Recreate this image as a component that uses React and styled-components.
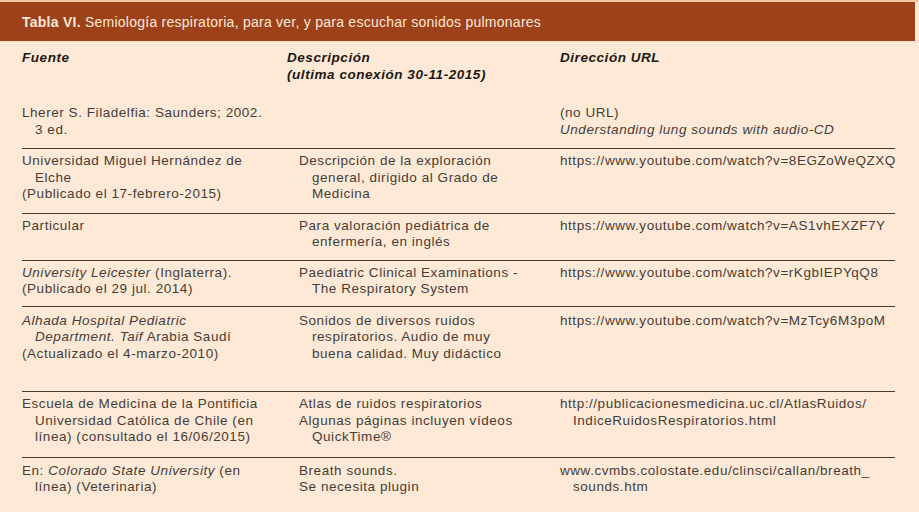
import React from 'react';
import styled, { createGlobalStyle } from 'styled-components';

const GlobalStyle = createGlobalStyle`
  html, body {
    margin: 0;
    padding: 0;
    background: #fde9d6;
  }
  body {
    font-family: "Liberation Sans", Arial, sans-serif;
    width: 919px;
    height: 512px;
    overflow: hidden;
  }
`;

const rows = [
  {
    cols: [
      [['Lherer S. Filadelfia: Saunders; 2002.', '3 ed.']],
      [],
      [['(no URL)'], [<i key="u">Understanding lung sounds with audio-CD</i>]],
    ],
    pad: [8, 10],
  },
  {
    cols: [
      [['Universidad Miguel Hernández de', 'Elche'], ['(Publicado el 17-febrero-2015)']],
      [['Descripción de la exploración', 'general, dirigido al Grado de', 'Medicina']],
      [['https://www.youtube.com/watch?v=8EGZoWeQZXQ']],
    ],
    pad: [4, 10],
  },
  {
    cols: [
      [['Particular']],
      [['Para valoración pediátrica de', 'enfermería, en inglés']],
      [['https://www.youtube.com/watch?v=AS1vhEXZF7Y']],
    ],
    pad: [4, 9],
  },
  {
    cols: [
      [[<><i>University Leicester</i> (Inglaterra).</>], ['(Publicado el 29 jul. 2014)']],
      [['Paediatric Clinical Examinations -', 'The Respiratory System']],
      [['https://www.youtube.com/watch?v=rKgbIEPYqQ8']],
    ],
    pad: [4, 8],
  },
  {
    cols: [
      [[<i key="a">Alhada Hospital Pediatric</i>, <><i>Department. Taif</i> Arabia Saudí</>], ['(Actualizado el 4-marzo-2010)']],
      [['Sonidos de diversos ruidos', 'respiratorios. Audio de muy', 'buena calidad. Muy didáctico']],
      [['https://www.youtube.com/watch?v=MzTcy6M3poM']],
    ],
    pad: [6, 29],
  },
  {
    cols: [
      [['Escuela de Medicina de la Pontificia', 'Universidad Católica de Chile (en', 'línea) (consultado el 16/06/2015)']],
      [['Atlas de ruidos respiratorios'], ['Algunas páginas incluyen vídeos', 'QuickTime®']],
      [['http://publicacionesmedicina.uc.cl/AtlasRuidos/', 'IndiceRuidosRespiratorios.html']],
    ],
    pad: [4, 11],
  },
  {
    cols: [
      [[<>En: <i>Colorado State University</i> (en</>, 'línea) (Veterinaria)']],
      [['Breath sounds.'], ['Se necesita plugin']],
      [['www.cvmbs.colostate.edu/clinsci/callan/breath_', 'sounds.htm']],
    ],
    pad: [5, 10],
  },
];

const Cell = ({ paras }) => (
  <Col>
    {paras.map((lines, i) => (
      <div key={i}>
        {lines.map((line, j) => (
          <Line key={j} $indent={j > 0}>{line}</Line>
        ))}
      </div>
    ))}
  </Col>
);

export default function App() {
  return (
    <>
      <GlobalStyle />
      <Page>
        <TitleBar>
          <span>
            <b>Tabla VI.</b> Semiología respiratoria, para ver, y para escuchar sonidos pulmonares
          </span>
        </TitleBar>
        <Table>
          <HeadRow>
            <Col $head>Fuente</Col>
            <Col $head $shift>
              <div>Descripción</div>
              <div>(ultima conexión 30-11-2015)</div>
            </Col>
            <Col $head>Dirección URL</Col>
          </HeadRow>
          {rows.map((r, i) => (
            <Row key={i} $top={r.pad[0]} $bottom={r.pad[1]} $last={i === rows.length - 1}>
              {r.cols.map((c, k) => (
                <Cell key={k} paras={c} />
              ))}
            </Row>
          ))}
        </Table>
      </Page>
    </>
  );
}

const Page = styled.div`
  width: 919px;
  height: 512px;
  padding-top: 2px;
  box-sizing: border-box;
  background: linear-gradient(#f6c9a4, #f6c9a4) top / 100% 2px no-repeat, #fde9d6;
`;

const TitleBar = styled.div`
  height: 39px;
  width: 915px;
  background: #9c4119;
  color: #fde7d6;
  font-size: 14px;
  letter-spacing: 0.25px;
  display: flex;
  align-items: center;
  padding-left: 22px;
  box-sizing: border-box;
  b {
    font-weight: 700;
  }
`;

const Table = styled.div`
  margin: 0 24px 0 22px;
  display: flex;
  flex-direction: column;
`;

const grid = `
  display: grid;
  grid-template-columns: 277px 261px 1fr;
`;

const HeadRow = styled.div`
  ${grid}
  padding: 9px 0 14px;
`;

const Row = styled.div`
  ${grid}
  padding: ${p => p.$top}px 0 ${p => p.$bottom}px;
  border-bottom: ${p => (p.$last ? 'none' : '1.5px solid #4a3b32')};
`;

const Col = styled.div`
  font-size: 13.5px;
  line-height: 16.5px;
  letter-spacing: 0.55px;
  color: ${p => (p.$head ? '#1e1814' : '#453d37')};
  font-weight: ${p => (p.$head ? 700 : 400)};
  font-style: ${p => (p.$head ? 'italic' : 'normal')};
  margin-left: ${p => (p.$shift ? '-12px' : '0')};
  white-space: nowrap;
`;

const Line = styled.div`
  padding-left: ${p => (p.$indent ? '13px' : '0')};
`;
